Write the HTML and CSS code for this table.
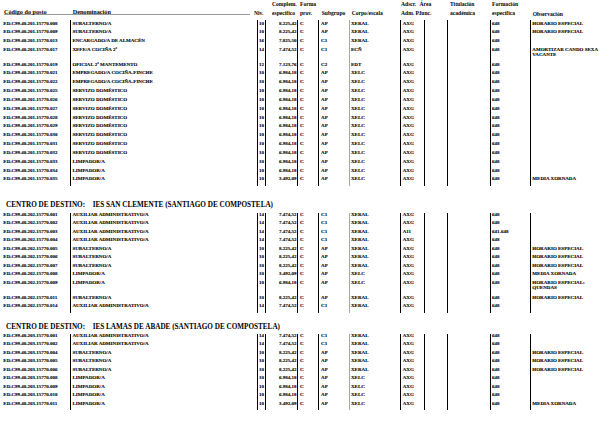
FILE: index.html
```html
<!DOCTYPE html>
<html lang="gl">
<head>
<meta charset="utf-8">
<title>Postos</title>
<link rel="stylesheet" href="styles.css">
</head>
<body>
<div class="head">
  <div class="h-rule">
    <div class="h-code">Código do posto</div>
    <div class="h-den">Denominación</div>
  </div>
  <div class="h-niv">Niv.</div>
  <div class="h-comp">Complem.<br>específico</div>
  <div class="h-forma">Forma<br>prov.</div>
  <div class="h-sub">Subgrupo</div>
  <div class="h-corpo">Corpo/escala</div>
  <div class="h-adscr">Adscr.<br>Adm. P.</div>
  <div class="h-area">Área<br>func.</div>
  <div class="h-tit">Titulación<br>académica</div>
  <div class="h-form">Formación<br>específica</div>
  <div class="h-obs">Observación</div>
</div>

<table class="grid b1">
<colgroup><col class="c1"><col class="c2"><col class="c3"><col class="c4"><col class="c5"><col class="c6"><col class="c7"><col class="c8"><col class="c9"><col class="c10"><col class="c11"><col class="c12"></colgroup>
<tr><td>ED.C99.40.201.15770.008</td><td>SUBALTERNO/A</td><td>10</td><td>8.225,42</td><td>C</td><td>AP</td><td>XERAL</td><td>AXG</td><td></td><td></td><td>648</td><td>HORARIO ESPECIAL</td></tr>
<tr><td>ED.C99.40.201.15770.009</td><td>SUBALTERNO/A</td><td>10</td><td>8.225,42</td><td>C</td><td>AP</td><td>XERAL</td><td>AXG</td><td></td><td></td><td>648</td><td>HORARIO ESPECIAL</td></tr>
<tr><td>ED.C99.40.201.15770.013</td><td>ENCARGADO/A DE ALMACÉN</td><td>16</td><td>7.825,50</td><td>C</td><td>C1</td><td>XERAL</td><td>AXG</td><td></td><td></td><td>648</td><td></td></tr>
<tr class="tall"><td>ED.C99.40.201.15770.017</td><td>XEFE/A COCIÑA 2ª</td><td>14</td><td>7.474,52</td><td>C</td><td>C1</td><td>ECÑ</td><td>AXG</td><td></td><td></td><td>648</td><td>AMORTIZAR CANDO SEXA<br>VACANTE</td></tr>
<tr><td>ED.C99.40.201.15770.019</td><td>OFICIAL 2ª MANTEMENTO</td><td>12</td><td>7.123,76</td><td>C</td><td>C2</td><td>EDT</td><td>AXG</td><td></td><td></td><td>648</td><td></td></tr>
<tr><td>ED.C99.40.201.15770.021</td><td>EMPREGADO/A COCIÑA-FINCHE</td><td>10</td><td>6.984,18</td><td>C</td><td>AP</td><td>XELC</td><td>AXG</td><td></td><td></td><td>648</td><td></td></tr>
<tr><td>ED.C99.40.201.15770.022</td><td>EMPREGADO/A COCIÑA-FINCHE</td><td>10</td><td>6.984,18</td><td>C</td><td>AP</td><td>XELC</td><td>AXG</td><td></td><td></td><td>648</td><td></td></tr>
<tr><td>ED.C99.40.201.15770.025</td><td>SERVIZO DOMÉSTICO</td><td>10</td><td>6.984,18</td><td>C</td><td>AP</td><td>XELC</td><td>AXG</td><td></td><td></td><td>648</td><td></td></tr>
<tr><td>ED.C99.40.201.15770.026</td><td>SERVIZO DOMÉSTICO</td><td>10</td><td>6.984,18</td><td>C</td><td>AP</td><td>XELC</td><td>AXG</td><td></td><td></td><td>648</td><td></td></tr>
<tr><td>ED.C99.40.201.15770.027</td><td>SERVIZO DOMÉSTICO</td><td>10</td><td>6.984,18</td><td>C</td><td>AP</td><td>XELC</td><td>AXG</td><td></td><td></td><td>648</td><td></td></tr>
<tr><td>ED.C99.40.201.15770.028</td><td>SERVIZO DOMÉSTICO</td><td>10</td><td>6.984,18</td><td>C</td><td>AP</td><td>XELC</td><td>AXG</td><td></td><td></td><td>648</td><td></td></tr>
<tr><td>ED.C99.40.201.15770.029</td><td>SERVIZO DOMÉSTICO</td><td>10</td><td>6.984,18</td><td>C</td><td>AP</td><td>XELC</td><td>AXG</td><td></td><td></td><td>648</td><td></td></tr>
<tr><td>ED.C99.40.201.15770.030</td><td>SERVIZO DOMÉSTICO</td><td>10</td><td>6.984,18</td><td>C</td><td>AP</td><td>XELC</td><td>AXG</td><td></td><td></td><td>648</td><td></td></tr>
<tr><td>ED.C99.40.201.15770.031</td><td>SERVIZO DOMÉSTICO</td><td>10</td><td>6.984,18</td><td>C</td><td>AP</td><td>XELC</td><td>AXG</td><td></td><td></td><td>648</td><td></td></tr>
<tr><td>ED.C99.40.201.15770.032</td><td>SERVIZO DOMÉSTICO</td><td>10</td><td>6.984,18</td><td>C</td><td>AP</td><td>XELC</td><td>AXG</td><td></td><td></td><td>648</td><td></td></tr>
<tr><td>ED.C99.40.201.15770.033</td><td>LIMPADOR/A</td><td>10</td><td>6.984,18</td><td>C</td><td>AP</td><td>XELC</td><td>AXG</td><td></td><td></td><td>648</td><td></td></tr>
<tr><td>ED.C99.40.201.15770.034</td><td>LIMPADOR/A</td><td>10</td><td>6.984,18</td><td>C</td><td>AP</td><td>XELC</td><td>AXG</td><td></td><td></td><td>648</td><td></td></tr>
<tr><td>ED.C99.40.201.15770.035</td><td>LIMPADOR/A</td><td>10</td><td>3.492,09</td><td>C</td><td>AP</td><td>XELC</td><td>AXG</td><td></td><td></td><td>648</td><td>MEDIA XORNADA</td></tr>
</table>

<div class="centro c-first"><span class="lbl">CENTRO DE DESTINO:</span>IES SAN CLEMENTE (SANTIAGO DE COMPOSTELA)</div>

<table class="grid b2">
<colgroup><col class="c1"><col class="c2"><col class="c3"><col class="c4"><col class="c5"><col class="c6"><col class="c7"><col class="c8"><col class="c9"><col class="c10"><col class="c11"><col class="c12"></colgroup>
<tr><td>ED.C99.40.202.15770.001</td><td>AUXILIAR ADMINISTRATIVO/A</td><td>14</td><td>7.474,52</td><td>C</td><td>C1</td><td>XERAL</td><td>AXG</td><td></td><td></td><td>648</td><td></td></tr>
<tr><td>ED.C99.40.202.15770.002</td><td>AUXILIAR ADMINISTRATIVO/A</td><td>14</td><td>7.474,52</td><td>C</td><td>C1</td><td>XERAL</td><td>AXG</td><td></td><td></td><td>648</td><td></td></tr>
<tr><td>ED.C99.40.202.15770.003</td><td>AUXILIAR ADMINISTRATIVO/A</td><td>14</td><td>7.474,52</td><td>C</td><td>C1</td><td>XERAL</td><td>A11</td><td></td><td></td><td>641-648</td><td></td></tr>
<tr><td>ED.C99.40.202.15770.004</td><td>AUXILIAR ADMINISTRATIVO/A</td><td>14</td><td>7.474,52</td><td>C</td><td>C1</td><td>XERAL</td><td>AXG</td><td></td><td></td><td>648</td><td></td></tr>
<tr><td>ED.C99.40.202.15770.005</td><td>SUBALTERNO/A</td><td>10</td><td>8.225,42</td><td>C</td><td>AP</td><td>XERAL</td><td>AXG</td><td></td><td></td><td>648</td><td>HORARIO ESPECIAL</td></tr>
<tr><td>ED.C99.40.202.15770.006</td><td>SUBALTERNO/A</td><td>10</td><td>8.225,42</td><td>C</td><td>AP</td><td>XERAL</td><td>AXG</td><td></td><td></td><td>648</td><td>HORARIO ESPECIAL</td></tr>
<tr><td>ED.C99.40.202.15770.007</td><td>SUBALTERNO/A</td><td>10</td><td>8.225,42</td><td>C</td><td>AP</td><td>XERAL</td><td>AXG</td><td></td><td></td><td>648</td><td>HORARIO ESPECIAL</td></tr>
<tr><td>ED.C99.40.202.15770.008</td><td>LIMPADOR/A</td><td>10</td><td>3.492,09</td><td>C</td><td>AP</td><td>XELC</td><td>AXG</td><td></td><td></td><td>648</td><td>MEDIA XORNADA</td></tr>
<tr class="tall"><td>ED.C99.40.202.15770.009</td><td>LIMPADOR/A</td><td>10</td><td>6.984,18</td><td>C</td><td>AP</td><td>XELC</td><td>AXG</td><td></td><td></td><td>648</td><td>HORARIO ESPECIAL:<br>QUENDAS</td></tr>
<tr><td>ED.C99.40.202.15770.011</td><td>SUBALTERNO/A</td><td>10</td><td>8.225,42</td><td>C</td><td>AP</td><td>XERAL</td><td>AXG</td><td></td><td></td><td>648</td><td>HORARIO ESPECIAL</td></tr>
<tr><td>ED.C99.40.202.15770.014</td><td>AUXILIAR ADMINISTRATIVO/A</td><td>14</td><td>7.474,52</td><td>C</td><td>C1</td><td>XERAL</td><td>AXG</td><td></td><td></td><td>648</td><td></td></tr>
</table>

<div class="centro c-next"><span class="lbl">CENTRO DE DESTINO:</span>IES LAMAS DE ABADE (SANTIAGO DE COMPOSTELA)</div>

<table class="grid b2">
<colgroup><col class="c1"><col class="c2"><col class="c3"><col class="c4"><col class="c5"><col class="c6"><col class="c7"><col class="c8"><col class="c9"><col class="c10"><col class="c11"><col class="c12"></colgroup>
<tr><td>ED.C99.40.203.15770.001</td><td>AUXILIAR ADMINISTRATIVO/A</td><td>14</td><td>7.474,52</td><td>C</td><td>C1</td><td>XERAL</td><td>AXG</td><td></td><td></td><td>648</td><td></td></tr>
<tr><td>ED.C99.40.203.15770.002</td><td>AUXILIAR ADMINISTRATIVO/A</td><td>14</td><td>7.474,52</td><td>C</td><td>C1</td><td>XERAL</td><td>AXG</td><td></td><td></td><td>648</td><td></td></tr>
<tr><td>ED.C99.40.203.15770.004</td><td>SUBALTERNO/A</td><td>10</td><td>8.225,42</td><td>C</td><td>AP</td><td>XERAL</td><td>AXG</td><td></td><td></td><td>648</td><td>HORARIO ESPECIAL</td></tr>
<tr><td>ED.C99.40.203.15770.005</td><td>SUBALTERNO/A</td><td>10</td><td>8.225,42</td><td>C</td><td>AP</td><td>XERAL</td><td>AXG</td><td></td><td></td><td>648</td><td>HORARIO ESPECIAL</td></tr>
<tr><td>ED.C99.40.203.15770.006</td><td>SUBALTERNO/A</td><td>10</td><td>8.225,42</td><td>C</td><td>AP</td><td>XERAL</td><td>AXG</td><td></td><td></td><td>648</td><td>HORARIO ESPECIAL</td></tr>
<tr><td>ED.C99.40.203.15770.008</td><td>LIMPADOR/A</td><td>10</td><td>6.984,18</td><td>C</td><td>AP</td><td>XELC</td><td>AXG</td><td></td><td></td><td>648</td><td></td></tr>
<tr><td>ED.C99.40.203.15770.009</td><td>LIMPADOR/A</td><td>10</td><td>6.984,18</td><td>C</td><td>AP</td><td>XELC</td><td>AXG</td><td></td><td></td><td>648</td><td></td></tr>
<tr><td>ED.C99.40.203.15770.010</td><td>LIMPADOR/A</td><td>10</td><td>6.984,18</td><td>C</td><td>AP</td><td>XELC</td><td>AXG</td><td></td><td></td><td>648</td><td></td></tr>
<tr><td>ED.C99.40.203.15770.011</td><td>LIMPADOR/A</td><td>10</td><td>3.492,09</td><td>C</td><td>AP</td><td>XELC</td><td>AXG</td><td></td><td></td><td>648</td><td>MEDIA XORNADA</td></tr>
</table>
</body>
</html>
```

FILE: styles.css
```css
* { box-sizing: border-box; }

body {
  margin: 0;
  background: #fff;
  color: #000;
  font-family: "Liberation Serif", "Times New Roman", serif;
  font-weight: bold;
}

/* ---------- column header ---------- */
.head {
  display: flex;
  align-items: flex-end;
  height: 20px;
  padding-bottom: 2.6px;
  font-size: 5.6px;
  line-height: 8.6px;
  white-space: nowrap;
}
.h-rule {
  display: flex;
  margin-left: 4px;
  margin-bottom: 2.4px;
  width: 246px;
  font-size: 6.2px;
  line-height: 5.5px;
  border-bottom: 1px solid #9a9a9a;
}
.h-code { width: 66.7px; }
.h-den { padding-left: 2px; }
.h-niv { width: 22px; padding-left: 4px; }
.h-comp { width: 28px; }
.h-forma { width: 21.7px; }
.h-sub { width: 30px; }
.h-corpo { width: 49.3px; }
.h-adscr { width: 18.5px; }
.h-area { width: 30.5px; }
.h-tit { width: 42px; }
.h-form { width: 40.7px; }
.h-obs { margin-bottom: -1px; }

/* ---------- data grids ---------- */
.grid {
  width: 616px;
  border-collapse: collapse;
  table-layout: fixed;
  font-size: 5px;
  line-height: 4.8px;
  -webkit-text-stroke: 0.1px #000;
}
.c1 { width: 70.7px; }
.c2 { width: 187px; }
.c3 { width: 7.6px; }
.c4 { width: 32.7px; }
.c5 { width: 21px; }
.c6 { width: 30.3px; }
.c7 { width: 51.7px; }
.c8 { width: 23.3px; }
.c9 { width: 23px; }
.c10 { width: 43px; }
.c11 { width: 40.4px; }
.c12 { width: 85.3px; }

.grid td {
  padding: 1.6px 1px 0 1.2px;
  vertical-align: top;
  white-space: nowrap;
  overflow: hidden;
  border-left: 1px solid #000;
}
.grid td:nth-child(1) { border-left: 0; padding-left: 3.3px; }
.grid td:nth-child(2) { border-left-width: 1.5px; }
.grid td:nth-child(3) { text-align: center; padding: 1.6px 0 0; overflow: visible; }
.grid td:nth-child(4) { text-align: right; padding-right: 1px; }
.grid td:nth-child(5),
.grid td:nth-child(6) { padding-left: 1.6px; }
.grid td:nth-child(7) { border-left: 1.6px solid #a8a8a8; }
.grid td:nth-child(12) { white-space: normal; }

.b1 tr { height: 8.85px; }
.b1 tr.tall { height: 14.4px; }
.b1 tr:last-child { height: 10.05px; }

.b2 tr { height: 8.5px; }
.b2 tr:first-child { height: 6.9px; }
.b2 tr:first-child td { padding-top: 0; }
.b2 tr.tall { height: 14.7px; }
.b2 tr:last-child { height: 10px; }

/* ---------- centre headings ---------- */
.centro {
  padding-left: 6px;
  font-size: 7.2px;
  line-height: 8px;
  white-space: nowrap;
}
.centro .lbl { display: inline-block; width: 86.7px; }
.c-first { margin: 15px 0 4px; }
.c-next { margin: 10px 0 3px; }
```
